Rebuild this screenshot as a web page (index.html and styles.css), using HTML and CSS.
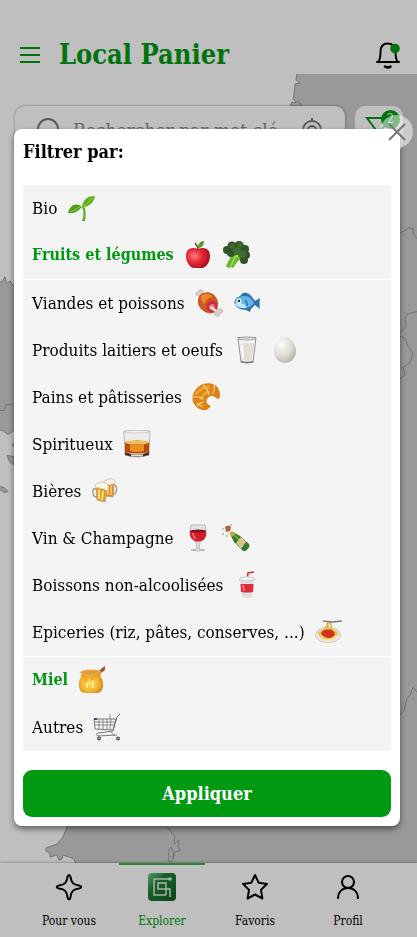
FILE: index.html
```html
<!DOCTYPE html>
<html lang="fr">
<head>
  <meta charset="UTF-8">
  <title>Local Panier</title>
  <meta name="viewport" content="width=device-width, initial-scale=1.0">
  <link rel="stylesheet" href="styles.css">
</head>
<body>
  <div class="app">
    <header class="header">
      <button class="icon-btn menu-btn" aria-label="Menu">
        <svg width="22" height="20" viewBox="0 0 22 20"><path d="M1 3h20M1 10h20M1 17h20" fill="none" stroke="#009a12" stroke-width="2"/></svg>
      </button>
      <h1 class="brand">Local Panier</h1>
      <button class="icon-btn" aria-label="Notifications">
        <svg width="26" height="28" viewBox="0 0 26 28">
          <path d="M2 21h22M3 21c2-2 2.500-4 2.500-10C5.500 5 8 2.500 12.500 2.500S20 5 20.500 11c0 6 .5 8 2.500 10" fill="none" stroke="#000" stroke-width="2" stroke-linecap="round" stroke-linejoin="round"/>
          <path d="M10 25.500q3 2 5.500 0" fill="none" stroke="#000" stroke-width="2.500" stroke-linecap="round"/>
          <circle cx="20" cy="7.500" r="4.800" fill="#009a12"/>
        </svg>
      </button>
    </header>

    <main class="explore">
      <svg class="map" viewBox="0 74 417 790" preserveAspectRatio="none" aria-hidden="true">
        <path class="land" d="M297 72L296 80 300 83 295 84 294 95 293 99 296 102 299 103 299 107 304 108 304 114 240 170 150 270 30 290 14 287 10 281 7 284 5 277 2 282 -2 283V430L3 431 8 435 14 431 40 480 68 826 63 838 57 845 46 849 46 852 50 854 50 858 57 856 59 861 62 860 63 856 69 858 74 860 76 866H420V72z"/>
        <path class="land" d="M290 106l2-4 4 1 2-2 4 5zM15 442l-3 4 3 1zM7 456l7 1v8l-4-2zM-1 487l5 1 4 4-3 1-6-3z"/>
        <path class="border" d="M0 411l4 0 2-6h4l4-1M400 233l5-2 3-3 5 1 0 4 4 6M417 312l-10 2-2 5 1 8-6 6M400 337l5 1 3 9 5 7-3 9-7 5 2 7-5 4M400 716l4-5 3-12 3-3 3-8 4 5"/>
        <path class="border" d="M160 826l7 1 4 6 4 4-1 8 5-4-1 7 3 3-6 2-2 6-3-2M171 848c-5 6-1 8-3 14 7 3 7-8 3-14z"/>
      </svg>
      <div class="search-row">
        <label class="search">
          <svg width="26" height="26" viewBox="0 0 26 26"><path d="M20 20l5 5M22 12a10 10 0 1 1-20 0 10 10 0 0 1 20 0z" fill="none" stroke="#777" stroke-width="2"/></svg>
          <input type="text" placeholder="Rechercher par mot clé" aria-label="Rechercher par mot clé">
          <svg width="24" height="26" viewBox="0 0 24 26"><g fill="none" stroke="#777" stroke-width="2"><circle cx="12" cy="13" r="9"/><circle cx="12" cy="13" r="4"/><path d="M12 1v4M12 21v4M0 13h4M20 13h4"/></g></svg>
        </label>
        <button class="filter-btn" aria-label="Filtres, 2 actifs">
          <svg width="28" height="28" viewBox="0 0 28 28"><path d="M2 6h24L16 18v8l-5-4v-4z" fill="none" stroke="#009a12" stroke-width="2"/></svg>
          <span class="badge">2</span>
        </button>
      </div>
    </main>

    <nav class="tabbar">
      <a class="tab" href="#pour-vous">
        <svg width="28" height="28" viewBox="0 0 28 28"><path d="M14 2q1 0 1.500 2c1 6 2.500 7.500 8.500 8.500 3 .6 3 2.400 0 3-6 1-7.500 2.500-8.500 8.500-.6 3-2.400 3-3 0-1-6-2.500-7.500-8.500-8.500-3-.6-3-2.400 0-3 6-1 7.500-2.500 8.500-8.500q.5-2 1.500-2z" fill="none" stroke="#000" stroke-width="2"/></svg>
        Pour vous
      </a>
      <a class="tab tab-active" href="#explorer">
        <svg width="28" height="28" viewBox="0 0 28 28">
          <defs><linearGradient id="logo" x1="0" y1="0" x2="1" y2="1"><stop offset="0" stop-color="#6fce88"/><stop offset=".35" stop-color="#207f38"/><stop offset="1" stop-color="#0c5d22"/></linearGradient></defs>
          <rect width="28" height="28" rx="4" fill="url(#logo)"/>
          <path d="M22 6H6v16h12M22 24v-8H10v-6h8v12" fill="none" stroke="#dff0df" stroke-width="1.500"/>
          <circle cx="22" cy="6" r="1.800" fill="#dff0df"/>
        </svg>
        Explorer
      </a>
      <a class="tab" href="#favoris">
        <svg width="28" height="28" viewBox="0 0 28 28"><path d="M14 2l3.600 7.700 8.400 1.200-6 6 1.400 8.600L14 21.500l-7.400 4L8 16.900l-6-6 8.400-1.200z" fill="none" stroke="#000" stroke-width="2" stroke-linejoin="round"/></svg>
        Favoris
      </a>
      <a class="tab" href="#profil">
        <svg width="28" height="28" viewBox="0 0 28 28"><g fill="none" stroke="#000" stroke-width="2"><circle cx="14" cy="9" r="6"/><path d="M4 26c0-7 4-11 10-11s10 4 10 11"/></g></svg>
        Profil
      </a>
    </nav>
  </div>

  <div class="overlay">
    <section class="modal" role="dialog" aria-labelledby="filter-title">
      <button class="close-btn" aria-label="Fermer">
        <svg width="18" height="18" viewBox="0 0 18 18"><path d="M1 1l16 16M17 1L1 17" fill="none" stroke="#777" stroke-width="2"/></svg>
      </button>
      <h2 class="modal-title" id="filter-title">Filtrer par:</h2>

      <div class="filters">
        <div class="group">
          <button class="filter" aria-pressed="false">Bio
            <svg class="food" viewBox="0 0 28 28"><path d="M15 27c2-5 2-10 0-14l2-1c2 5 2 10 1 15z" fill="#62ad16"/><path d="M15 13c1-8 6-11 13-11-1 6-5 11-13 11z" fill="#63ae1c"/><path d="M15 13C9 8 3 11 1 19c6 1 10-2 14-6z" fill="#4f9f16"/><path d="M16 12c4-2 7-4 9-8M3 18c4-1 7-4 11-6" fill="none" stroke="#94d34b"/></svg>
          </button>
          <button class="filter" aria-pressed="true">Fruits et légumes
            <svg class="food" viewBox="0 0 28 28"><defs><radialGradient id="apple" cx=".35" cy=".4" r=".7"><stop offset="0" stop-color="#ff777a"/><stop offset=".5" stop-color="#e22734"/><stop offset="1" stop-color="#a50e1d"/></radialGradient></defs><path d="M14 8c5-2 12-1 12 7 0 6-4 12-8 12h-8c-4 0-8-6-8-12 0-8 7-9 12-7z" fill="url(#apple)"/><path d="M14 9q0-4-3-7" fill="none" stroke="#69401f" stroke-width="1.500"/><path d="M14 7c0-4 2-7 6-7 0 4-2 7-6 7z" fill="#4c9e2b"/></svg>
            <svg class="food" viewBox="0 0 28 28"><path d="M10 13l-6 12 2 2 3-1 2 1 5-7 8-5-5-5z" fill="#65ba27"/><path d="M9 25l4-9 4-2" fill="none" stroke="#a9df5b" stroke-width="1.500"/><g fill="#2f5528"><circle cx="5" cy="9" r="4"/><circle cx="10" cy="5" r="4.500"/><circle cx="17" cy="5" r="5"/><circle cx="23" cy="8" r="4"/><circle cx="24" cy="14" r="4"/><circle cx="22" cy="19" r="4"/><circle cx="9" cy="12" r="4"/></g><g fill="#42692f"><circle cx="15" cy="10" r="4"/><circle cx="20" cy="13" r="4"/><circle cx="10" cy="5" r="2.500"/><circle cx="18" cy="4" r="2.500"/></g></svg>
          </button>
        </div>

        <div class="group">
          <button class="filter" aria-pressed="false">Viandes et poissons
            <svg class="food" viewBox="0 0 28 28"><path d="M5 8L1 6Q0 3 3 3q0-3 4-2 2 1 1 3l3 4zM17 19l6 1q4-1 5 2 0 2-3 2 0 4-3 3-3 0-2-3l-4-3z" fill="#d8d1c5" stroke="#aaa39a" stroke-width=".5"/><path d="M5 6c5-5 14-3 17 4 2 4 1 10-2 13-4 3-10 1-14-3-4-5-4-10-1-14z" fill="#c85a1c"/><path d="M6 7c4-4 10-2 12 1-4 0-8 3-8 7-3-2-5-5-4-8z" fill="#ee8530"/><ellipse cx="17" cy="17.500" rx="5.500" ry="5.500" fill="#cf294b"/><circle cx="17" cy="18" r="3" fill="#ef7485"/><path d="M16 17l6 4-2 2-5-4z" fill="#eee9df"/></svg>
            <svg class="food" viewBox="0 0 28 28"><path d="M7 7l3-3q5-1 9 4l3 4 5-3q-1 6 0 11l-5-4-4 4-1 3-4-2q-9 0-12-7Q2 9 7 7z" fill="#2a6fb0"/><path d="M1 14Q4 7 11 7c7 0 9 5 10 7-2 3-6 5-11 5-5 0-8-2-9-5z" fill="#62b5e5"/><path d="M1 15q4-2 10 0 3 4 3 4-8 1-13-4z" fill="#bfe4f3"/><path d="M12 11q3 3 2 6" fill="none" stroke="#287db9" stroke-width="1.500"/><circle cx="6" cy="12" r="2.500" fill="#fff"/><circle cx="6" cy="12" r="1.300" fill="#122a43"/></svg>
          </button>
          <button class="filter" aria-pressed="false">Produits laitiers et oeufs
            <svg class="food" viewBox="0 0 28 28"><path d="M5 1.500h18L20 26q-6 2-12 0z" fill="#f2f3f2" stroke="#8e9390"/><path d="M7 8q7-2 14 0l-2 16q-5 1-10 0z" fill="#e4dfd4"/><path d="M9 9l1 13" stroke="#fff" stroke-width="2"/><ellipse cx="14" cy="2.500" rx="9" ry="1.500" fill="#ddd" stroke="#888" stroke-width=".7"/><path d="M8 25.500q6 2 12 0" fill="none" stroke="#777" stroke-width="1.500"/></svg>
            <svg class="food" viewBox="0 0 28 28"><defs><radialGradient id="egg" cx=".35" cy=".3" r=".75"><stop offset="0" stop-color="#fdfcf9"/><stop offset=".6" stop-color="#dedbd4"/><stop offset="1" stop-color="#b7b2a9"/></radialGradient></defs><path d="M14 1c6 0 11 8 11 14 0 7-5 12-11 12S3 22 3 15C3 9 8 1 14 1z" fill="url(#egg)"/></svg>
          </button>
          <button class="filter" aria-pressed="false">Pains et pâtisseries
            <svg class="food" viewBox="0 0 28 28"><path d="M17 25c-4 5-13 1-16-6C-1 11 4 4 11 1c7-2 14 0 16 6 2 5 1 9-1 9-3-1-4-4-7-3-5 1-6 7-2 9 3 1 1 2 0 3z" fill="#d98218"/><path d="M4 12c2-5 8-8 14-8M9 17c0-4 4-8 9-8M5 20l6 4" fill="none" stroke="#efa234" stroke-width="3"/><path d="M1 14q7-1 11 2M11 2q5 4 6 10M22 2q1 5-1 9M5 23q4-4 7-4" fill="none" stroke="#ffd27b" stroke-width="1.200"/></svg>
          </button>
          <button class="filter" aria-pressed="false">Spiritueux
            <svg class="food" viewBox="0 0 28 28"><path d="M1 1h26l-1 24q-12 4-24 0z" fill="#ececea" stroke="#aaa" stroke-width=".8"/><path d="M2 12q12-3 24 0v10q-12 3-24 0z" fill="#b64c0b"/><path d="M7 14q7 2 14 0v7q-7 2-14 0z" fill="#e98f22"/><ellipse cx="14" cy="12.500" rx="12" ry="2" fill="#f5bd57"/><path d="M2 22q12 5 24 0v3q-12 4-24 0z" fill="#4e2921"/><path d="M8 25.500h12" stroke="#ddd" stroke-width="2"/><ellipse cx="14" cy="1.800" rx="13" ry="1" fill="#fff" stroke="#aaa" stroke-width=".5"/></svg>
          </button>
          <button class="filter" aria-pressed="false">Bières
            <svg class="food" viewBox="0 0 28 28"><g stroke-width="1"><path d="M22 8q5-1 3 7-1 3-4 2" fill="none" stroke="#ad9c88" stroke-width="1.500"/><path d="M14 6l9-1-1 15-8-1z" fill="#de8b20" stroke="#bda479"/><path d="M17 9v9M20 9v9" stroke="#ffd165" stroke-width="1.500"/><path d="M13 7q-1-4 3-4 2-2 5-1 4 0 3 4l-5 2z" fill="#f9f0df" stroke="#d6cab8"/><path d="M5 12q-4-1-3 4 0 4 4 4" fill="none" stroke="#ad9c88" stroke-width="1.500"/><path d="M5 10l11 2-2 13-8-2z" fill="#e59a2a" stroke="#bda479"/><path d="M8 13v9M12 14l-1 9" stroke="#ffe07b" stroke-width="2"/><path d="M4 10q-1-3 3-4 4-2 7 0 4 1 3 5l-1 3-3-2z" fill="#fff7e8" stroke="#d6cab8"/></g></svg>
          </button>
          <button class="filter" aria-pressed="false">Vin &amp; Champagne
            <svg class="food" viewBox="0 0 28 28"><path d="M7 1h14q4 14-5 17l-1 7 6 1q-7 2-14 0l6-1-1-7Q3 15 7 1z" fill="#e2e2e2" stroke="#aaa" stroke-width=".8"/><path d="M6 7h16q1 8-5 10-3 1-6 0Q5 14 6 7z" fill="#d01c2a"/><ellipse cx="14" cy="7" rx="8" ry="1.500" fill="#7d1020"/><path d="M9 9q0 4 3 6" fill="none" stroke="#f37076" stroke-width="1.500"/></svg>
            <svg class="food" viewBox="0 0 28 28"><path d="M8 10l3-2 7 4 9 8c2 3-3 8-6 7l-9-9z" fill="#37782b"/><path d="M11 10l10 9" stroke="#6da83c" stroke-width="2"/><path d="M14 19l5-6 5 5-5 7z" fill="#dbc38e"/><path d="M7 9l3-2 3 3-3 3z" fill="#cda444"/><path d="M3 3q4-3 6 0l-1 4-4 1z" fill="#a4693e"/><g fill="#8d7555"><circle cx="1" cy="10" r=".8"/><circle cx="5" cy="12" r=".8"/><circle cx="1" cy="5" r=".7"/><circle cx="9" cy="1" r=".7"/></g></svg>
          </button>
          <button class="filter" aria-pressed="false">Boissons non-alcoolisées
            <svg class="food" viewBox="0 0 28 28"><path d="M14 8l1-6 6-1" fill="none" stroke="#d93344" stroke-width="1.700"/><path d="M7 8h14l-2 18q-5 2-10 0z" fill="#dededc"/><path d="M7.500 13h13L20 21q-6 1-12 0z" fill="#db303c"/><path d="M10 14l1 6" stroke="#ef6c71" stroke-width="2"/><path d="M7 7q7-3 14 0l1 2q-8 2-16 0z" fill="#f1f1ef" stroke="#bbb" stroke-width=".7"/></svg>
          </button>
          <button class="filter" aria-pressed="false">Epiceries (riz, pâtes, conserves, ...)
            <svg class="food" viewBox="0 0 28 28"><ellipse cx="13" cy="17" rx="12.500" ry="7.500" fill="#eeeae1" stroke="#c9c4b9"/><ellipse cx="13" cy="16" rx="10" ry="6" fill="#e8bd51"/><path d="M5 17q3 5 8 5t9-5M6 13q7-5 14 0" fill="none" stroke="#fae28c" stroke-width="1.300"/><path d="M6 16q1-5 7-5t7 5q-2 4-6 4t-8-4z" fill="#cf351d"/><path d="M10 12l3-8h2l2 8M13 4v8" fill="none" stroke="#e3b33f" stroke-width="1.500"/><path d="M8 3l9 1 10-1" fill="none" stroke="#7c7c79" stroke-width="1.500"/></svg>
          </button>
        </div>

        <div class="group">
          <button class="filter" aria-pressed="true">Miel
            <svg class="food" viewBox="0 0 28 28"><defs><radialGradient id="honey" cx=".45" cy=".55" r=".65"><stop offset="0" stop-color="#ffe05b"/><stop offset=".6" stop-color="#f1ae2b"/><stop offset="1" stop-color="#bd711c"/></radialGradient></defs><path d="M19 7l5-5 3-2v4l-6 5z" fill="#a65428"/><path d="M3 6h20l-1 4c5 5 4 17-3 17H7C0 27-1 15 4 10z" fill="url(#honey)"/><path d="M3 9q10 3 20 0l-1 3-1 4-2-4-3-1-2 4-2-4-3 2v4l-2-1-1-5-3 1z" fill="#f5a22a"/><path d="M9 16v6M15 15v7" stroke="#fff6af" stroke-width="1.500"/><ellipse cx="13" cy="6.500" rx="10.500" ry="2.500" fill="#e09c38" stroke="#e9b04c"/></svg>
          </button>
          <button class="filter" aria-pressed="false">Autres
            <svg class="food" viewBox="0 0 28 28"><g fill="none" stroke="#777" stroke-width="1"><path d="M27 1l-3 3-4 14-15 2q-3 2 0 3l19-1M1 6l1 10 18 1 3-11z"/><path d="M2 9h20M2 12h19M6 6v10M10 6v10M14 6v10M18 6l-1 10M17 1v5M17 18l5 5" stroke-width=".8"/></g><path d="M1 6h3" stroke="#284e77" stroke-width="2"/><circle cx="6" cy="25.500" r="2" fill="#555"/><circle cx="25" cy="25.500" r="2" fill="#555"/><circle cx="6" cy="25.500" r=".7" fill="#ccc"/><circle cx="25" cy="25.500" r=".7" fill="#ccc"/></svg>
          </button>
        </div>
      </div>

      <button class="apply-btn">Appliquer</button>
    </section>
  </div>
</body>
</html>
```

FILE: styles.css
```css
* {
  box-sizing: border-box;
}

body {
  margin: 0;
  background-color: #fff;
  color: #000;
  font-family: "Roboto Slab", "DejaVu Serif Condensed", "DejaVu Serif", serif;
  font-size: 17px;
}

button,
input {
  font: inherit;
  color: inherit;
  border: none;
  background: none;
  padding: 0;
}

button {
  cursor: pointer;
}

svg {
  display: block;
  flex-shrink: 0;
}

.app {
  display: flex;
  flex-direction: column;
  min-height: 100vh;
}

.header {
  display: flex;
  align-items: center;
  height: 74px;
  padding: 36px 16px 0 19px;
}

.menu-btn {
  margin-right: 18px;
}

.brand {
  flex: 1;
  margin: 0;
  color: #009a12;
  font-size: 27px;
  line-height: 36px;
}

.explore {
  position: relative;
  flex: 1;
  padding: 32px 14px 0 15px;
}

.map {
  position: absolute;
  top: 0;
  left: 0;
  width: 100%;
  height: 100%;
}

.land {
  fill: #ccc;
  stroke: #999;
  stroke-width: 1;
}

.border {
  fill: none;
  stroke: #999;
  stroke-width: 1;
}

.search-row {
  position: relative;
  display: flex;
  gap: 10px;
}

.search {
  display: flex;
  flex: 1;
  align-items: center;
  gap: 11px;
  min-width: 0;
  height: 47px;
  padding: 0 21px;
  border-radius: 10px;
  background: #fff;
  box-shadow: 0 0 3px rgba(0, 0, 0, 0.4);
}

.search input {
  flex: 1;
  width: 100%;
  min-width: 0;
  font-size: 19px;
  outline: none;
}

.search input::placeholder {
  color: #888;
}

.filter-btn {
  position: relative;
  flex-shrink: 0;
  width: 48px;
  padding: 0 10px 7px;
  border-radius: 10px;
  background: #fff;
}

.badge {
  position: absolute;
  top: 4px;
  right: 3px;
  width: 19px;
  height: 19px;
  border-radius: 50%;
  background: #009a12;
  color: #fff;
  font-size: 12px;
  line-height: 19px;
}

.tabbar {
  position: relative;
  display: grid;
  grid-template-columns: repeat(4, 1fr);
  gap: 7px;
  height: 74px;
  padding: 0 26px;
  background: #fff;
  box-shadow: 0 0 3px rgba(0, 0, 0, 0.4);
}

.tab {
  display: flex;
  flex-direction: column;
  align-items: center;
  gap: 12px;
  padding-top: 8px;
  border-top: 2px solid transparent;
  color: #000;
  font-size: 12px;
  line-height: 16px;
  text-decoration: none;
  white-space: nowrap;
}

.tab-active {
  border-color: #2fb54a;
  color: #009a12;
}

.overlay {
  position: fixed;
  inset: 0;
  padding: 129px 17px 0 14px;
  background: rgba(0, 0, 0, 0.25);
}

.modal {
  position: relative;
  padding: 9px;
  border-radius: 8px;
  background: #fff;
  box-shadow: 0 3px 6px rgba(0, 0, 0, 0.5);
}

.close-btn {
  position: absolute;
  top: -14px;
  right: -13px;
  display: grid;
  place-items: center;
  width: 33px;
  height: 33px;
  border-radius: 50%;
  background: rgba(255, 255, 255, 0.5);
}

.modal-title {
  margin: 0 0 19px;
  font-size: 18px;
  line-height: 28px;
}

.group + .group {
  margin-top: 1px;
}

.filter {
  display: flex;
  align-items: center;
  gap: 10px;
  width: 100%;
  height: 47px;
  padding: 0 9px 2px;
  background: #f4f4f4;
  text-align: left;
  white-space: nowrap;
}

.filter[aria-pressed="true"] {
  color: #009a12;
  font-size: 16px;
  font-weight: bold;
}

.food {
  width: 28px;
  height: 28px;
}

.apply-btn {
  width: 100%;
  height: 47px;
  margin-top: 19px;
  border-radius: 9px;
  background: #009a12;
  color: #fff;
  font-size: 18px;
  font-weight: bold;
}
```
